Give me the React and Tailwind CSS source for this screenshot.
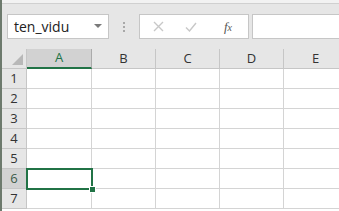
import React from 'react';

const COLS = ['A', 'B', 'C', 'D', 'E'];
const ROWS = [1, 2, 3, 4, 5, 6, 7];
const font = { fontFamily: '"Open Sans", "Noto Sans", sans-serif' };

const Toolbar = () => (
  <div className="h-[45px] shrink-0 bg-[#e6e6e6] flex items-start pt-[10px] pl-[5px]">
    <div className="w-[102px] h-[25px] bg-white border border-[#c6c6c6] flex items-center justify-between pl-[6px] pr-[6px]">
      <span className="text-[14px] text-[#222] leading-none" style={font}>ten_vidu</span>
      <svg width="8" height="5" viewBox="0 0 8 5">
        <path d="M0 0 L8 0 L4 4 Z" fill="#7a7a7a" />
      </svg>
    </div>
    <div className="w-[30px] h-[25px] flex flex-col items-center justify-center gap-[2px]">
      <span className="w-[2px] h-[2px] bg-[#a8a8a8]" />
      <span className="w-[2px] h-[2px] bg-[#a8a8a8]" />
      <span className="w-[2px] h-[2px] bg-[#a8a8a8]" />
    </div>
    <div className="w-[110px] h-[25px] bg-white border border-[#c6c6c6] flex items-center">
      <div className="w-[36px] flex justify-center">
        <svg width="11" height="11" viewBox="0 0 11 11">
          <path d="M1 1 L10 10 M10 1 L1 10" stroke="#c8c8c8" strokeWidth="1.4" />
        </svg>
      </div>
      <div className="w-[30px] flex justify-center">
        <svg width="12" height="10" viewBox="0 0 12 10">
          <path d="M1 5.5 L4.5 9 L11 1" stroke="#c8c8c8" strokeWidth="1.4" fill="none" />
        </svg>
      </div>
      <div className="flex-1 flex justify-center pl-[2px]">
        <span className="text-[13px] italic text-[#555] leading-none" style={{ fontFamily: '"Liberation Serif", serif' }}>
          f<span className="text-[10px]">x</span>
        </span>
      </div>
    </div>
    <div className="ml-[3px] flex-1 h-[25px] bg-white border border-[#c6c6c6] border-r-0" />
  </div>
);

const HeaderRow = () => (
  <div className="flex h-[20px] shrink-0">
    <div className="w-[25px] shrink-0 bg-[#e6e6e6] border-r border-b border-[#c6c6c6] flex items-end justify-end p-[3px]">
      <svg width="11" height="11" viewBox="0 0 11 11">
        <path d="M11 0 L11 11 L0 11 Z" fill="#b8b8b8" />
      </svg>
    </div>
    {COLS.map((c) => (
      <div
        key={c}
        className={
          c === 'A'
            ? 'w-[65px] shrink-0 bg-[#d2d2d2] border-r border-[#ababab] border-b-2 border-b-[#217346] text-[#217346] flex items-center justify-center text-[13px]'
            : 'w-[64px] shrink-0 bg-[#e6e6e6] border-r border-b border-[#c6c6c6] text-[#333] flex items-center justify-center text-[13px]'
        }
        style={font}
      >
        {c}
      </div>
    ))}
  </div>
);

const Row = ({ n }) => {
  const sel = n === 6;
  return (
    <div className="flex h-[20px] shrink-0">
      <div
        className={
          sel
            ? 'w-[25px] shrink-0 bg-[#d2d2d2] border-r border-r-[#ababab] border-b border-[#c6c6c6] text-[#3d5a48] flex items-center justify-center text-[13px]'
            : 'w-[25px] shrink-0 bg-[#e6e6e6] border-r border-b border-[#c6c6c6] text-[#333] flex items-center justify-center text-[13px]'
        }
        style={font}
      >
        {n}
      </div>
      {COLS.map((c, i) => (
        <div
          key={c}
          className={(i === 0 ? 'w-[65px]' : 'w-[64px]') + ' shrink-0 bg-white border-r border-b border-[#d4d4d4] relative'}
        >
          {sel && c === 'A' && (
            <div className="absolute -left-[1px] -top-[1px] w-[67px] h-[22px] border-2 border-[#217346] z-10">
              <div className="absolute -right-[5px] -bottom-[5px] w-[7px] h-[7px] bg-[#217346] border border-white" />
            </div>
          )}
        </div>
      ))}
    </div>
  );
};

export default function App() {
  return (
    <div className="w-[339px] h-[211px] overflow-hidden flex bg-white">
      <div className="w-[2px] shrink-0 bg-[#6d7a6d]" />
      <div className="flex-1 flex flex-col overflow-hidden">
        <div className="h-[4px] shrink-0 bg-[#f2f2f2] border-b border-[#d0d0d0]" />
        <Toolbar />
        <HeaderRow />
        {ROWS.map((n) => (
          <Row key={n} n={n} />
        ))}
      </div>
    </div>
  );
}
